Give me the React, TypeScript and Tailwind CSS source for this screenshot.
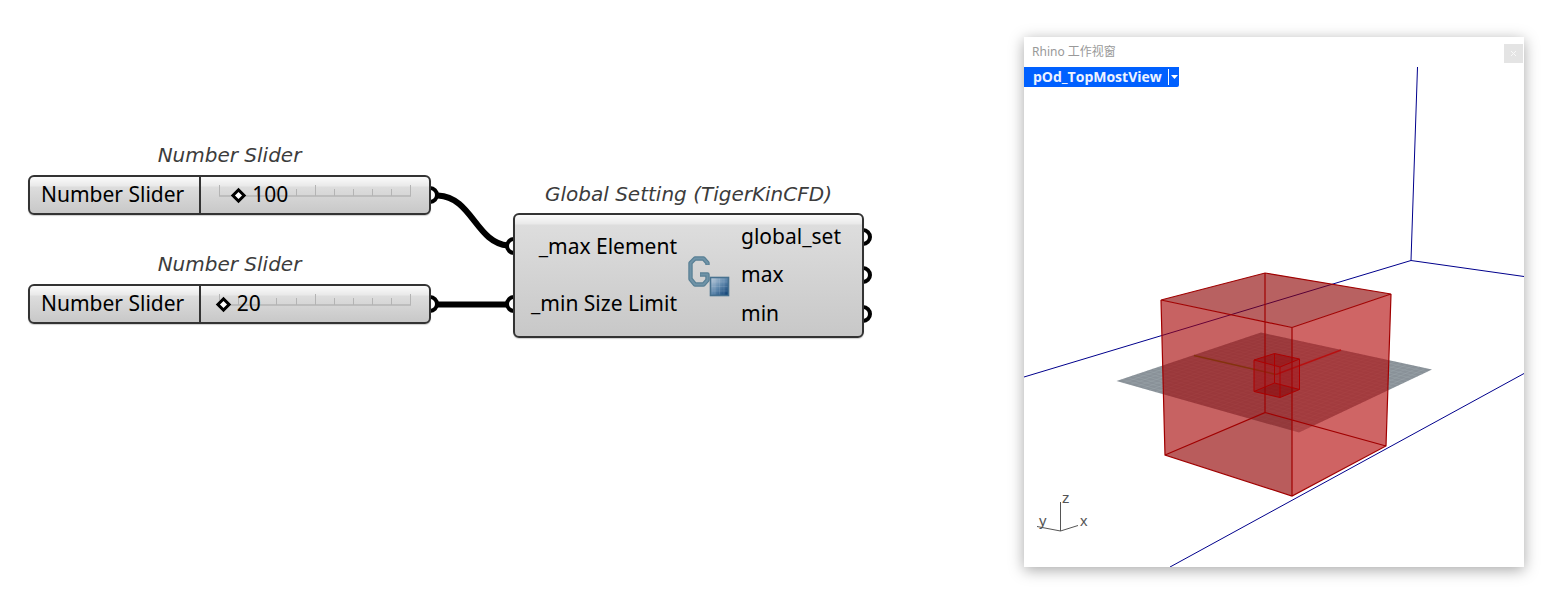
import { useState } from "react";

const nodeSurface =
  "rounded-md border-2 border-[#333333] bg-[linear-gradient(to_bottom,#fbfbfb_0px,#e9e9e9_9px,#dddddd_10px,#c8c8c8_100%)] shadow-[0_1px_1px_#00000030]";
const titleText =
  "text-center font-['DejaVu_Sans',sans-serif] text-xl leading-7 whitespace-nowrap text-[#3c3c3c] italic";
const port = "absolute size-[18px] rounded-full border-4 border-black bg-white";

function NumberSlider({ id, className, initial }: { id: string; className: string; initial: number }) {
  const [value, setValue] = useState(initial);
  return (
    <section className={`absolute w-[403px] ${className}`}>
      <h2 className={titleText}>Number Slider</h2>
      <div className="relative mt-1.5">
        <span className={`${port} -right-2 top-[11px]`} />
        <div className={`relative flex h-10 ${nodeSurface}`}>
          <label htmlFor={id} className="w-[171px] border-r-2 border-[#333333] pl-[11px] text-[21px] leading-[34px] whitespace-nowrap">
            Number Slider
          </label>
          <div className="relative flex flex-1 items-center pl-[13px]">
            <svg className="absolute left-[17px] top-2 h-3 w-[194px]" viewBox="0 0 194 12" fill="none" stroke="#b4b4b4" strokeWidth="1">
              <path d="M1 11H193" strokeWidth="1.5" />
              <path d="M1.5 0V11M97.5 0V11M192.5 0V11" />
              <path d="M20.5 4V11M39.5 4V11M58.5 4V11M78.5 4V11M116.5 4V11M135.5 4V11M154.5 4V11M173.5 4V11" />
            </svg>
            <input
              id={id}
              type="range"
              min={0}
              max={1000}
              value={value}
              onChange={(e) => setValue(Number(e.target.value))}
              className="relative h-5 w-[203px] appearance-none bg-transparent [&::-webkit-slider-thumb]:size-[11px] [&::-webkit-slider-thumb]:rotate-45 [&::-webkit-slider-thumb]:appearance-none [&::-webkit-slider-thumb]:border-[3px] [&::-webkit-slider-thumb]:border-black [&::-webkit-slider-thumb]:bg-white"
            />
            <output
              htmlFor={id}
              className="pointer-events-none absolute top-0 text-[21px] leading-[34px]"
              style={{ left: 32 + value * 0.192 }}
            >
              {value}
            </output>
          </div>
        </div>
      </div>
    </section>
  );
}

function GlobalIcon() {
  return (
    <svg className="h-11 w-11 shrink-0" viewBox="0 0 44 44" fill="none">
      <defs>
        <linearGradient id="tile" x1="0" y1="0" x2="1" y2="1">
          <stop offset="0" stopColor="#c3d2df" />
          <stop offset=".5" stopColor="#5f88ad" />
          <stop offset="1" stopColor="#05386e" />
        </linearGradient>
      </defs>
      <path
        d="M21.500 11V9L17.500 4.500H9L4.500 9V25L9 30.500H17.500L21.500 26V20.500H14"
        stroke="#587f94"
        strokeWidth="4.4"
        strokeLinejoin="round"
      />
      <path d="M21.500 10.500V9L17.500 4.500H9L4.500 9V25L9 30.500H17.500L21.500 26V20.500H14.500" stroke="#6f93a7" strokeWidth="2" strokeLinejoin="round" />
      <rect x="24.500" y="23.500" width="18" height="18" fill="url(#tile)" stroke="#47718f" strokeWidth="1.6" />
      <path d="M29 24.500V40.500M33.500 24.500V40.500M38 24.500V40.500M25.500 28H41.500M25.500 32.500H41.500M25.500 37H41.500" stroke="#dfe8ef" strokeOpacity=".16" strokeWidth=".8" />
    </svg>
  );
}

function GlobalSetting() {
  return (
    <section className="absolute left-[513px] top-[180px] w-[351px]">
      <h2 className={titleText}>Global Setting (TigerKinCFD)</h2>
      <div className="relative mt-[5px]">
        <span className={`${port} -left-2 top-6`} />
        <span className={`${port} -left-2 top-[82px]`} />
        <span className={`${port} -right-2 top-[15px]`} />
        <span className={`${port} -right-2 top-[53px]`} />
        <span className={`${port} -right-2 top-[92px]`} />
        <div className={`relative flex h-[125px] items-center pt-0.5 pb-1 pl-3 text-[21px] leading-7 whitespace-nowrap ${nodeSurface}`}>
          <ul className="flex h-full w-[150px] flex-col items-end justify-around">
            <li>_max Element</li>
            <li>_min Size Limit</li>
          </ul>
          <div className="ml-[9px] pt-0.5">
            <GlobalIcon />
          </div>
          <ul className="ml-[11px] flex h-full flex-col justify-around">
            <li>global_set</li>
            <li>max</li>
            <li>min</li>
          </ul>
        </div>
      </div>
    </section>
  );
}

type Pt = [number, number];
const plane: Pt[] = [[92.5, 314], [237, 265.5], [408, 302.5], [275, 365.5]];
const mix = (a: Pt, b: Pt, t: number): Pt => [a[0] + (b[0] - a[0]) * t, a[1] + (b[1] - a[1]) * t];
const steps = Array.from({ length: 27 }, (_, i) => (i + 1) / 28);
const gridPath = steps
  .map((t) => {
    const [a, b, c, d] = plane;
    return `M${mix(a, b, t)}L${mix(d, c, t)}M${mix(b, c, t)}L${mix(a, d, t)}`;
  })
  .join("");

function Scene() {
  return (
    <svg className="block w-full" viewBox="0 0 500 500" fill="none" role="img" aria-label="Perspective view">
      <path d="M393.500 0L387 193.500L500 209.500M387 193.500L0 310M500 306.500L146 500" stroke="#00008c" strokeWidth="1" />
      <polygon points={plane.join(" ")} fill="#899198" />
      <path d={gridPath} stroke="#a0a8ae" strokeWidth=".4" />
      <path d="M170 288.500L252 307.500" stroke="#4f8020" strokeWidth="1.500" />
      <path d="M252 307.500L317 283" stroke="#c02020" strokeWidth="1.500" />
      <polygon points="137,233 268,260.500 268,429 141,388" fill="#a50202" fillOpacity=".62" />
      <polygon points="268,260.500 367,227 362,379 268,429" fill="#b20707" fillOpacity=".62" />
      <polygon points="137,233 241,206 367,227 268,260.500" fill="#8d0000" fillOpacity=".62" />
      <polygon points="141,388 241,345.500 268,353 268,429" fill="#703c3c" fillOpacity=".16" />
      <polygon points="268,353 362,379 268,429" fill="#d06060" fillOpacity=".25" />
      <path
        d="M137 233L241 206L367 227L268 260.500ZM137 233L141 388L268 429L362 379L367 227M268 260.500V429M241 206V345.500L141 388M241 345.500L362 379"
        stroke="#a00000"
        strokeWidth="1.200"
      />
      <polygon points="230,293 250.500,286.500 275.500,292 275.500,322.500 256,330.500 230,324.500" fill="#a60a10" fillOpacity=".4" />
      <polygon points="230,293 250.500,286.500 275.500,292 256,300" fill="#800000" fillOpacity=".2" />
      <polygon points="230,324.500 250.500,316 275.500,322.500 256,330.500" fill="#700000" fillOpacity=".25" />
      <path
        d="M230 293L250.500 286.500L275.500 292L256 300ZM230 293V324.500L256 330.500L275.500 322.500V292M256 300V330.500M250.500 286.500V316L230 324.500M250.500 316L275.500 322.500"
        stroke="#ae0000"
      />
      <path d="M36.500 435V464M13 459.500L36.500 464L54 458.500" stroke="#555555" />
      <g fill="#555555" className="font-['Liberation_Sans',sans-serif] text-[15px]">
        <text x="38" y="436">z</text>
        <text x="15" y="459">y</text>
        <text x="56" y="459">x</text>
      </g>
    </svg>
  );
}

function RhinoViewport() {
  return (
    <section className="w-[500px] shrink-0 self-start bg-white shadow-[0_3px_14px_#00000059]">
      <header className="flex h-[30px] items-center justify-between pr-px pl-2 font-['Noto_Sans','Noto_Sans_CJK_SC',sans-serif] text-xs text-[#999999]">
        <h2>Rhino 工作视窗</h2>
        <button type="button" aria-label="Close" className="mt-0.5 flex size-[19px] items-center justify-center bg-[#e4e4e4]">
          <svg className="size-[5px]" viewBox="0 0 5 5" stroke="#f8f8f8" strokeWidth="1">
            <path d="M0 0L5 5M5 0L0 5" />
          </svg>
        </button>
      </header>
      <div className="relative">
        <div className="absolute left-0 top-0 flex h-5 items-center rounded-br-[2px] bg-[#0060ff] text-white">
          <button type="button" className="w-36 pl-[9px] text-left font-['Open_Sans',sans-serif] text-sm leading-5 font-bold whitespace-nowrap text-[#eef3ff]">
            pOd_TopMostView
          </button>
          <button type="button" aria-label="View menu" className="flex h-4 w-[11px] items-center justify-center border-l border-white">
            <svg className="h-1 w-[7px]" viewBox="0 0 7 4" fill="currentColor">
              <path d="M0 0H7L3.500 4Z" />
            </svg>
          </button>
        </div>
        <Scene />
      </div>
    </section>
  );
}

export default function App() {
  return (
    <main className="flex min-h-screen bg-white pt-[37px] pr-[26px] pb-6 font-['Noto_Sans',sans-serif] text-black">
      <div className="relative -mt-[37px] flex-1">
        <svg className="absolute left-[436px] top-[190px] h-[120px] w-[76px]" viewBox="436 190 76 120" fill="none" stroke="#000000" strokeWidth="6">
          <path d="M438 195.500C472 197 476 243 508 245.500M438 304.500H508" />
        </svg>
        <NumberSlider id="slider-max" className="left-7 top-[141px]" initial={100} />
        <NumberSlider id="slider-min" className="left-7 top-[250px]" initial={20} />
        <GlobalSetting />
      </div>
      <RhinoViewport />
    </main>
  );
}
